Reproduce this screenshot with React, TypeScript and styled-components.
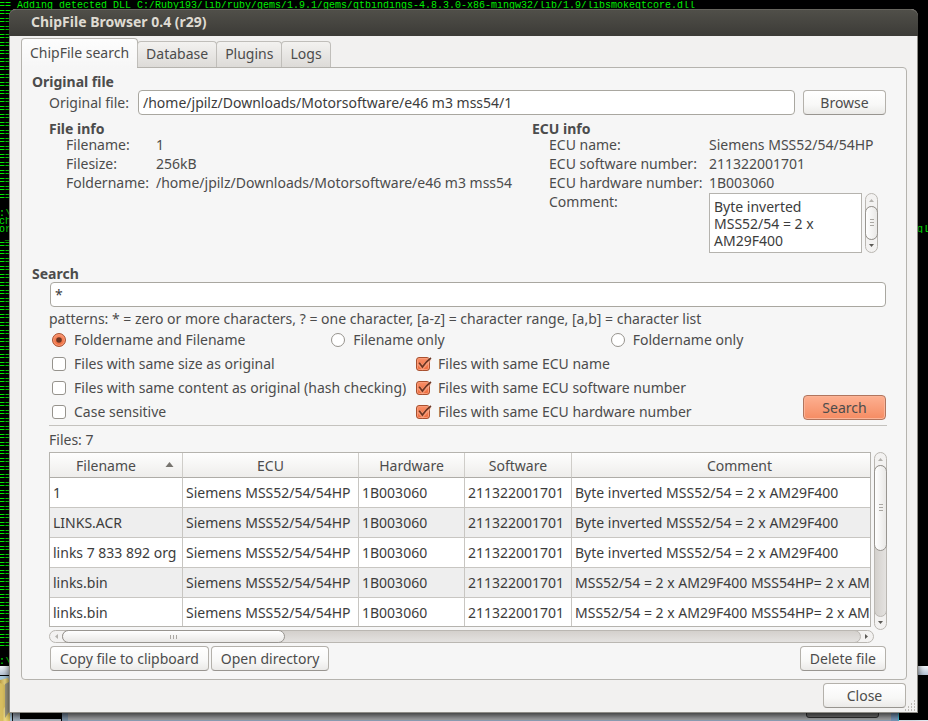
import React from "react";
import styled, { createGlobalStyle, css } from "styled-components";

const ink = "#4c4c4c";
const line = "#b5b3ae";

const GlobalStyle = createGlobalStyle`
  * { box-sizing: border-box; }
  body { margin: 0; background: #000; }
  body, button, input, textarea {
    font-family: "Noto Sans", "Open Sans", sans-serif;
    font-size: 14px;
    line-height: 19px;
    color: ${ink};
  }
`;

/* ---------- desktop behind the window ---------- */

const Desktop = styled.div`
  position: relative;
  min-height: 100vh;
  padding: 9px 10px 9px 9px;
  overflow: hidden;
`;

const Backdrop = styled.div`
  position: absolute;
  inset: 0;
  overflow: hidden;
  background: #000;
`;

const Terminal = styled.div`
  position: absolute;
  top: 1px;
  left: -1px;
  right: -1px;
  font-family: "Liberation Mono", monospace;
  font-size: 10px;
  line-height: 10px;
  color: #00f000;
`;

const TerminalRow = styled.div`
  display: flex;
  justify-content: space-between;
  height: 8px;
  overflow: hidden;
  white-space: pre;
`;

const LowerDesktop = styled.svg`
  position: absolute;
  left: 0;
  bottom: 0;
  display: block;
  width: 100%;
  height: 56px;
`;

/* ---------- window ---------- */

const Window = styled.main`
  position: relative;
  border: 1px solid #8e8c86;
  border-top: 0;
  border-radius: 7px 7px 0 0;
  background: #f2f1f0;
  box-shadow: 0 3px 7px rgba(0, 0, 0, 0.7);
`;

const TitleBar = styled.header`
  height: 27px;
  margin: 0 -1px;
  padding: 0 22px;
  border-top: 1px solid #66645d;
  border-radius: 7px 7px 0 0;
  background: linear-gradient(#504f49, #3c3b37);
`;

const Title = styled.h1`
  margin: 0;
  font-size: 14px;
  line-height: 23px;
  font-weight: 700;
  color: #dfdbd2;
`;

const Body = styled.div`
  padding: 2px 10px 4px 11px;
`;

const Tabs = styled.nav`
  display: flex;
  align-items: flex-end;
  position: relative;
`;

const Tab = styled.button<{ $active?: boolean }>`
  height: 26px;
  padding: 0 8px 2px;
  margin: 0 0 0 -1px;
  border: 1px solid #c0beba;
  border-bottom: 0;
  border-radius: 4px 4px 0 0;
  background: linear-gradient(#f3f2f0, #dddbd8);
  white-space: nowrap;
  ${(p) =>
    p.$active &&
    css`
      height: 30px;
      margin: 0 0 -1px;
      padding-bottom: 3px;
      border-color: ${line};
      background: linear-gradient(#fdfdfd, #f6f6f6);
    `}
`;

const Panel = styled.section`
  padding: 5px 19px 8px 10px;
  border: 1px solid ${line};
  border-radius: 0 4px 4px 4px;
  background: #f6f6f6;
`;

const Indented = styled.div`
  padding-left: 17px;
`;

const Heading = styled.h2<{ $small?: boolean }>`
  margin: 0;
  font-size: 14px;
  font-weight: 700;
  line-height: ${(p) => (p.$small ? 15 : 17)}px;
`;

const Button = styled.button<{ $primary?: boolean }>`
  height: 25px;
  min-width: 83px;
  margin: 0 1px;
  padding: 0 9px;
  border: 1px solid #b4b1ab;
  border-bottom-color: #989590;
  border-radius: 4px;
  background: linear-gradient(#ffffff, #f8f8f7 60%, #ebeae8);
  line-height: 22px;
  white-space: nowrap;
  ${(p) =>
    p.$primary &&
    css`
      border-color: #b0755e;
      background: linear-gradient(#fdb091, #f58c63);
      box-shadow: inset 0 0 0 1px #fcb497;
    `}
`;

const TextInput = styled.input`
  display: block;
  flex: 1;
  min-width: 0;
  width: 100%;
  height: 25px;
  padding: 0 4px;
  border: 1px solid #a9a7a0;
  border-radius: 4px;
  background: #fff;
  color: #3c3c3c;
`;

const Inset = styled.div`
  padding: 0 1px;
`;

const FileRow = styled.div`
  display: flex;
  align-items: center;
  gap: 8px;
  margin-bottom: 6px;
  label { margin-right: 1px; }
  button { margin-left: 0; }
`;

const InfoColumns = styled.div`
  display: grid;
  grid-template-columns: minmax(0, 1fr) 355px;
  min-height: 144px;
`;

const InfoList = styled.dl<{ $label: number }>`
  display: grid;
  grid-template-columns: ${(p) => p.$label}px minmax(0, 1fr);
  grid-auto-rows: minmax(19px, auto);
  margin: 0;
  padding-left: 17px;
  line-height: 17px;
  white-space: nowrap;
  dd { margin: 0; }
`;

const CommentBox = styled.div`
  display: grid;
  grid-template-columns: 153px 13px;
  gap: 3px;
  height: 60px;
`;

const CommentArea = styled.textarea`
  height: 60px;
  padding: 4px;
  border: 1px solid ${line};
  border-radius: 0;
  background: #fff;
  color: #3c3c3c;
  line-height: 17px;
  resize: none;
  overflow: hidden;
`;

/* ---------- option controls ---------- */

const Hint = styled.p`
  margin: 3px 0 0;
  line-height: 18px;
`;

const RadioRow = styled.div`
  display: grid;
  grid-template-columns: repeat(3, 1fr);
`;

const OptionArea = styled.div`
  display: flex;
  align-items: flex-end;
  justify-content: space-between;
  padding-bottom: 1px;
  border-bottom: 1px solid #c4c2be;
`;

const OptionGrid = styled.div`
  display: grid;
  grid-template-columns: 364px auto;
`;

const SearchSlot = styled.div`
  padding-bottom: 4px;
`;

const OptionLabel = styled.label`
  display: flex;
  align-items: center;
  gap: 8px;
  height: 24px;
  padding: 0 0 2px 3px;
  white-space: nowrap;
`;

const Mark = styled.span`
  position: relative;
  display: flex;
  padding-top: 2px;
  svg {
    position: absolute;
    left: 0;
    top: 1px;
    pointer-events: none;
  }
`;

const choice = css`
  appearance: none;
  width: 14px;
  height: 14px;
  margin: 0;
  border: 1px solid #96938d;
  background: #fff;
  &:checked {
    border-color: #a8502f;
    background: linear-gradient(#f98f68, #ee6c3d);
    box-shadow: inset 0 0 0 1px #f99b78;
  }
`;

const Checkbox = styled.input`
  ${choice}
  border-radius: 3px;
`;

const Radio = styled.input`
  ${choice}
  border-radius: 50%;
`;

/* ---------- file table ---------- */

const FileCount = styled.p`
  margin: 4px 0 3px;
`;

const TableArea = styled.div`
  display: grid;
  grid-template-columns: minmax(0, 1fr) 13px;
  column-gap: 3px;
  height: 178px;
`;

const Viewport = styled.div`
  height: 175px;
  border: 1px solid ${line};
  overflow: hidden;
  background: #fff;
`;

const Table = styled.table`
  width: calc(100% + 38px);
  table-layout: fixed;
  border-collapse: separate;
  border-spacing: 0;
  white-space: nowrap;
  color: #3c3c3c;
`;

const Col = styled.col<{ $width?: number }>`
  width: ${(p) => (p.$width ? `${p.$width}px` : "auto")};
`;

const HeadCell = styled.th`
  height: 25px;
  padding: 0 20px 0 0;
  border-right: 1px solid #cfcdc9;
  border-bottom: 1px solid #aeaca7;
  background: linear-gradient(#fefefe, #eeedeb);
  font-weight: 400;
  color: ${ink};
  &:not(:first-child) { padding: 0; }
  &:first-child { position: relative; }
  svg { position: absolute; right: 8px; top: 8px; }
`;

const Row = styled.tr`
  &:nth-child(even) { background: #eeeeee; }
`;

const Cell = styled.td`
  height: 30px;
  padding: 0 3px;
  border-right: 1px solid #c8c6c2;
  border-bottom: 1px solid #c8c6c2;
`;

const Footer = styled.div`
  display: flex;
  margin-top: 3px;
`;

const Spacer = styled.div`
  flex: 1;
`;

const Actions = styled.footer`
  display: flex;
  justify-content: flex-end;
  margin-top: 3px;
`;

const Grip = styled.svg`
  position: absolute;
  right: 1px;
  bottom: 1px;
`;

/* ---------- scroll bars ---------- */

const Bar = styled.div<{ $across?: boolean }>`
  display: flex;
  flex-direction: ${(p) => (p.$across ? "row" : "column")};
  ${(p) => (p.$across ? "height: 13px; margin-right: 13px;" : "height: 100%;")}
  border: 1px solid #bab7b2;
  border-radius: 7px;
  background: #f3f2f1;
`;

const BarButton = styled.button`
  display: flex;
  align-items: center;
  justify-content: center;
  flex: 0 0 13px;
  min-width: 0;
  padding: 0;
  border: 0;
  background: transparent;
`;

const Track = styled.div<{ $across?: boolean }>`
  flex: 1;
  display: flex;
  flex-direction: ${(p) => (p.$across ? "row" : "column")};
  margin: -1px;
  border: 1px solid #bab7b2;
  border-radius: 7px;
  background: linear-gradient(${(p) => (p.$across ? "to bottom" : "to right")}, #d3d0cc, #e4e2e0);
`;

const Thumb = styled.div<{ $across?: boolean; $size: number }>`
  display: flex;
  align-items: center;
  justify-content: center;
  flex: 0 0 ${(p) => (p.$size === 100 ? "calc(100% + 2px)" : `${p.$size}%`)};
  margin: -1px;
  border: 1px solid #989590;
  border-radius: 7px;
  background: linear-gradient(${(p) => (p.$across ? "to bottom" : "to right")}, #ffffff, #e9e8e6);
`;

const turns = { up: 0, right: 90, down: 180, left: 270 };

function Arrow({ to, faint }: { to: keyof typeof turns; faint?: boolean }) {
  return (
    <svg width="7" height="7" viewBox="0 0 7 7" aria-hidden="true">
      <path
        d="M1 5 L3.5 2 L6 5Z"
        fill={faint ? "#b4b2ae" : "#5c5a56"}
        transform={`rotate(${turns[to]} 3.5 3.5)`}
      />
    </svg>
  );
}

function ScrollBar({ across, size }: { across?: boolean; size: number }) {
  return (
    <Bar $across={across}>
      <BarButton aria-label={across ? "Scroll left" : "Scroll up"}>
        <Arrow to={across ? "left" : "up"} faint />
      </BarButton>
      <Track $across={across}>
        <Thumb $across={across} $size={size}>
          <svg width="8" height="8" viewBox="0 0 8 8" aria-hidden="true">
            <path
              d={across ? "M.5 2v4M3.5 2v4M6.500 2v4" : "M2 .5h4M2 3.5h4M2 6.5h4"}
              stroke="#aaa7a2"
            />
          </svg>
        </Thumb>
      </Track>
      <BarButton aria-label={across ? "Scroll right" : "Scroll down"}>
        <Arrow to={across ? "right" : "down"} />
      </BarButton>
    </Bar>
  );
}

/* ---------- data ---------- */

const terminalRows: [string, string?][] = [
  [
    "== Adding detected DLL C:/Ruby193/lib/ruby/gems/1.9.1/gems/qtbindings-4.8.3.0-x86-mingw32/lib/1.9/libsmokeqtcore.dll",
  ],
  ...Array.from({ length: 24 }, (): [string] => ["=="]),
  [" "],
  [":\\"],
  ["ch"],
  ["or", "ql"],
  [" _"],
  ...Array.from({ length: 51 }, (): [string] => ["=="]),
  [" "],
  [":\\"],
];

const ecu = "Siemens MSS52/54/54HP";
const inverted = "Byte inverted MSS52/54 = 2 x AM29F400";
const dual = "MSS52/54 = 2 x AM29F400 MSS54HP= 2 x AM29F800";

const files = [
  ["1", ecu, "1B003060", "211322001701", inverted],
  ["LINKS.ACR", ecu, "1B003060", "211322001701", inverted],
  ["links 7 833 892 org", ecu, "1B003060", "211322001701", inverted],
  ["links.bin", ecu, "1B003060", "211322001701", dual],
  ["links.bin", ecu, "1B003060", "211322001701", dual],
];

const options = [
  ["Files with same size as original", false],
  ["Files with same ECU name", true],
  ["Files with same content as original (hash checking)", false],
  ["Files with same ECU software number", true],
  ["Case sensitive", false],
  ["Files with same ECU hardware number", true],
] as const;

function CheckOption({ label, on }: { label: string; on: boolean }) {
  return (
    <OptionLabel>
      <Mark>
        <Checkbox type="checkbox" defaultChecked={on} />
        {on && (
          <svg width="16" height="15" viewBox="0 0 16 15" aria-hidden="true">
            <path d="M3 7.500 L6.500 11.500 L14 3" fill="none" stroke="#fbb79c" strokeWidth="4" opacity=".5" />
            <path d="M3.2 6.8 L6.4 11 Q10 5.500 15 2" fill="none" stroke="#6b3522" strokeWidth="1.700" />
          </svg>
        )}
      </Mark>
      {label}
    </OptionLabel>
  );
}

function RadioOption({ label, on }: { label: string; on?: boolean }) {
  return (
    <OptionLabel>
      <Mark>
        <Radio type="radio" name="scope" defaultChecked={on} />
        {on && (
          <svg width="14" height="16" viewBox="0 0 14 16" aria-hidden="true">
            <circle cx="7" cy="8" r="2.8" fill="#6b3522" />
          </svg>
        )}
      </Mark>
      {label}
    </OptionLabel>
  );
}

function DesktopBackdrop() {
  return (
    <Backdrop aria-hidden="true">
      <Terminal>
        {terminalRows.map(([left, right], i) => (
          <TerminalRow key={i}>
            <span>{left}</span>
            {right && <span>{right}</span>}
          </TerminalRow>
        ))}
      </Terminal>
      <LowerDesktop viewBox="0 0 928 56" preserveAspectRatio="none">
        <defs>
          <linearGradient id="strip" x1="0" y1="0" x2="0" y2="1">
            <stop offset="0" stopColor="#f4f7fb" />
            <stop offset="1" stopColor="#b5c2d4" />
          </linearGradient>
          <linearGradient id="folder" x1="0" y1="0" x2="1" y2="0">
            <stop offset="0" stopColor="#b99a45" />
            <stop offset="0.5" stopColor="#f1dd86" />
            <stop offset="1" stopColor="#d8bd58" />
          </linearGradient>
        </defs>
        <rect y="0" width="12" height="9" fill="url(#strip)" />
        <rect y="10" width="12" height="46" fill="#a9c9dc" />
        <path d="M0 14 L8 12 L10 16 V56 H0Z" fill="url(#folder)" />
        <path d="M5 18 L9 16 V46 L5 52Z" fill="#9f9b86" />
        <path d="M0 17 L5 19 V41 L3 43 V56 H0Z" fill="#d9bf60" />
        <rect x="12" y="46" width="8" height="10" fill="#a9b6c5" />
        <rect x="12" y="46" width="1" height="10" fill="#111" />
        <rect x="20" y="53" width="41" height="3" fill="#b4bcc4" />
        <rect x="62" y="46" width="829" height="10" fill="#a7a9ab" />
        <rect x="62" y="46" width="6" height="10" fill="#8297ad" />
        <rect x="68" y="54" width="823" height="1" fill="#93a6bd" />
        <rect x="68" y="55" width="823" height="1" fill="#c3d3e6" />
        <path d="M806.500 46 V49 Q806.500 51.500 809 51.500 H876 Q878.500 51.500 878.500 49 V46" fill="#777" stroke="#333" />
        <rect x="891" y="46" width="7" height="10" fill="#7c9cc0" />
        <rect x="898" y="46" width="1" height="10" fill="#42c4dc" />
        <rect x="899" y="54" width="29" height="2" fill="#dfe7ef" />
        <rect x="918" y="0" width="10" height="9" fill="url(#strip)" />
      </LowerDesktop>
    </Backdrop>
  );
}

export default function App() {
  return (
    <Desktop>
      <GlobalStyle />
      <DesktopBackdrop />
      <Window>
        <TitleBar>
          <Title>ChipFile Browser 0.4 (r29)</Title>
        </TitleBar>
        <Body>
          <Tabs>
            <Tab $active>ChipFile search</Tab>
            <Tab>Database</Tab>
            <Tab>Plugins</Tab>
            <Tab>Logs</Tab>
          </Tabs>
          <Panel>
            <Heading>Original file</Heading>
            <Indented>
              <FileRow>
                <label htmlFor="original">Original file:</label>
                <TextInput
                  id="original"
                  defaultValue="/home/jpilz/Downloads/Motorsoftware/e46 m3 mss54/1"
                />
                <Button>Browse</Button>
              </FileRow>
              <InfoColumns>
                <div>
                  <Heading $small>File info</Heading>
                  <InfoList $label={90}>
                    <dt>Filename:</dt>
                    <dd>1</dd>
                    <dt>Filesize:</dt>
                    <dd>256kB</dd>
                    <dt>Foldername:</dt>
                    <dd>/home/jpilz/Downloads/Motorsoftware/e46 m3 mss54</dd>
                  </InfoList>
                </div>
                <div>
                  <Heading $small>ECU info</Heading>
                  <InfoList $label={160}>
                    <dt>ECU name:</dt>
                    <dd>{ecu}</dd>
                    <dt>ECU software number:</dt>
                    <dd>211322001701</dd>
                    <dt>ECU hardware number:</dt>
                    <dd>1B003060</dd>
                    <dt>
                      <label htmlFor="comment">Comment:</label>
                    </dt>
                    <dd>
                      <CommentBox>
                        <CommentArea id="comment" readOnly value={inverted} />
                        <ScrollBar size={100} />
                      </CommentBox>
                    </dd>
                  </InfoList>
                </div>
              </InfoColumns>
            </Indented>
            <Heading>
              <label htmlFor="pattern">Search</label>
            </Heading>
            <Indented>
              <Inset>
                <TextInput id="pattern" defaultValue="*" />
              </Inset>
              <Hint>
                patterns: * = zero or more characters, ? = one character, [a-z] = character
                range, [a,b] = character list
              </Hint>
              <RadioRow>
                <RadioOption label="Foldername and Filename" on />
                <RadioOption label="Filename only" />
                <RadioOption label="Foldername only" />
              </RadioRow>
              <OptionArea>
                <OptionGrid>
                  {options.map(([label, on]) => (
                    <CheckOption key={label} label={label} on={on} />
                  ))}
                </OptionGrid>
                <SearchSlot>
                  <Button $primary>Search</Button>
                </SearchSlot>
              </OptionArea>
              <FileCount>Files: 7</FileCount>
              <TableArea>
                <Viewport>
                  <Table>
                    <colgroup>
                      <Col $width={133} />
                      <Col $width={176} />
                      <Col $width={106} />
                      <Col $width={107} />
                      <Col />
                    </colgroup>
                    <thead>
                      <tr>
                        <HeadCell>
                          Filename
                          <svg width="9" height="7" viewBox="0 0 9 7" aria-hidden="true">
                            <path d="M0.500 6 L4.500 1 L8.500 6Z" fill="#77746f" />
                          </svg>
                        </HeadCell>
                        <HeadCell>ECU</HeadCell>
                        <HeadCell>Hardware</HeadCell>
                        <HeadCell>Software</HeadCell>
                        <HeadCell>Comment</HeadCell>
                      </tr>
                    </thead>
                    <tbody>
                      {files.map((cells, r) => (
                        <Row key={r}>
                          {cells.map((text, c) => (
                            <Cell key={c}>{text}</Cell>
                          ))}
                        </Row>
                      ))}
                    </tbody>
                  </Table>
                </Viewport>
                <ScrollBar size={57} />
              </TableArea>
              <ScrollBar across size={28} />
              <Footer>
                <Button>Copy file to clipboard</Button>
                <Button>Open directory</Button>
                <Spacer />
                <Button>Delete file</Button>
              </Footer>
            </Indented>
          </Panel>
          <Actions>
            <Button>Close</Button>
          </Actions>
        </Body>
        <Grip width="11" height="11" viewBox="0 0 11 11" aria-hidden="true">
          <path
            d="M9 1h1M6 4h4M3 7h7M0 10h10"
            stroke="#bdbab5"
            strokeWidth="2"
            strokeDasharray="1 2"
          />
        </Grip>
      </Window>
    </Desktop>
  );
}
